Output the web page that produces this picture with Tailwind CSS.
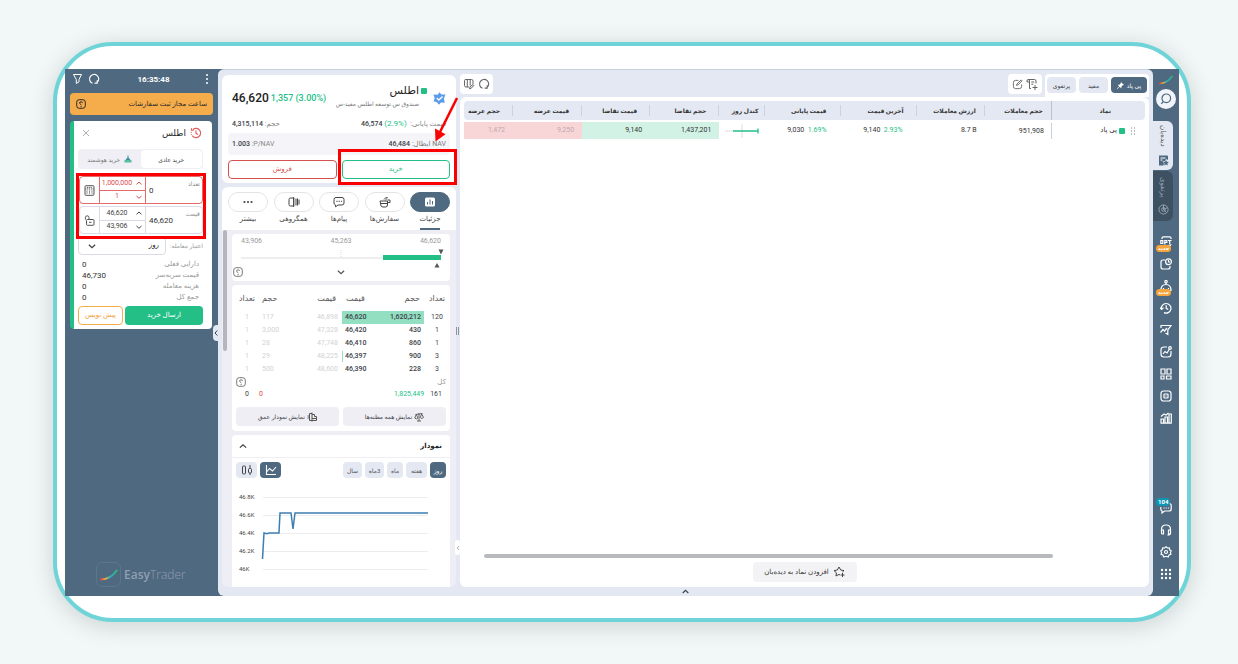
<!DOCTYPE html>
<html lang="fa">
<head>
<meta charset="utf-8">
<title>EasyTrader</title>
<script src="https://cdn.jsdelivr.net/npm/@tailwindcss/browser@4"></script>
</head>
<body class="flex min-h-screen bg-[#f2f8f8] pt-[42px] pr-[47px] pb-[42px] pl-[53px] font-['Roboto','DejaVu_Sans',sans-serif] text-[7px] leading-[11px] text-[#3c4248] whitespace-nowrap">
<svg class="absolute size-0">
  <symbol id="up" viewBox="0 0 8 8"><path d="M1.500 5.300 4 3l2.500 2.300" fill="none" stroke="currentColor"/></symbol>
  <symbol id="down" viewBox="0 0 8 8"><path d="M1.500 3 4 5.300 6.500 3" fill="none" stroke="currentColor"/></symbol>
  <symbol id="help" viewBox="0 0 10 10"><rect x=".7" y=".7" width="8.600" height="8.600" rx="2.500" fill="none" stroke="currentColor"/><path d="M6.700 3.800C6.500 2.500 3.500 2.500 3.500 4c0 1 1.600.9 1.600 2.200M5.100 7v1.100" fill="none" stroke="currentColor"/></symbol>
  <symbol id="refresh" viewBox="0 0 12 12"><path d="M4.500 10.300A4.600 4.600 0 1 1 9 9.600M9.200 7.300v2.800H6.600" fill="none" stroke="currentColor" stroke-width="1.100"/></symbol>
  <symbol id="swoosh" viewBox="0 0 20 13"><path d="M1 11.500C9 11.500 14 8 18.500 1.500" fill="none" stroke="url(#sw)" stroke-width="2.200" stroke-linecap="round"/></symbol>
  <linearGradient id="sw"><stop offset="0" stop-color="#e8473f"/><stop offset=".3" stop-color="#f3b13c"/><stop offset=".6" stop-color="#1fb3c6"/><stop offset="1" stop-color="#35b875"/></linearGradient>
</svg>
<div class="flex flex-1 rounded-[60px] border-4 border-[#6fd4d8] bg-white px-2 pt-[23px] pb-[22px] shadow-[0_4px_24px_rgba(0,0,0,0.16)]">
<div class="flex min-w-0 flex-1 bg-[#4f6980]">

  <!-- Order entry -->
  <aside class="relative flex w-[153px] shrink-0 flex-col px-[5px]">
    <header class="flex h-5 items-center pl-px text-white">
      <button aria-label="filter" class="ml-px"><svg class="size-3" viewBox="0 0 12 12" fill="none" stroke="currentColor"><path d="M1.500 1.500h8L7 6.500v2.300L4.300 10.500v-4z"/></svg></button>
      <button aria-label="refresh" class="ml-1"><svg class="size-3"><use href="#refresh"/></svg></button>
      <time class="flex-1 pl-[6px] text-center text-[8px] font-bold">16:35:48</time>
      <button aria-label="menu" class="w-3"><svg class="size-3" viewBox="0 0 12 12" fill="currentColor"><circle cx="6" cy="2" r="1"/><circle cx="6" cy="6" r="1"/><circle cx="6" cy="10" r="1"/></svg></button>
    </header>
    <div class="mt-1 flex h-[22px] items-center justify-between rounded bg-[#f5ad4b] px-1.5 text-[#2a2a2a]">
      <svg class="size-2.5"><use href="#help"/></svg>
      <span dir="rtl">ساعت مجاز ثبت سفارشات</span>
    </div>
    <form class="relative mt-1.5 mr-px rounded border-l-4 border-[#24bf87] bg-white pr-[9px] pb-1 pl-1">
      <div class="flex h-7 items-center justify-between pr-px pb-1 pl-1 text-[9px] text-[#25282c]">
        <button type="button" aria-label="close"><svg class="size-2" viewBox="0 0 8 8" stroke="#999" fill="none" stroke-width=".8"><path d="m1 1 6 6M7 1 1 7"/></svg></button>
        <div class="flex items-center gap-1"><span dir="rtl">اطلس</span>
        <svg class="size-3" viewBox="0 0 12 12" fill="none" stroke="#e05a5a" stroke-width="1.100"><path d="M3 2.500A4.600 4.600 0 1 1 2.200 8.600" /><path d="M1.500 1.300v2h2.200M6 3.500v3l2 1M1.300 5v.8M1.500 7v.7"/></svg></div>
      </div>
      <div class="flex h-5 rounded bg-[#f0eff5] p-px text-[6px]" dir="rtl">
        <button type="button" class="flex-1 rounded bg-white">خرید عادی</button>
        <button type="button" class="flex flex-1 items-center justify-center gap-1 text-[#777]"><svg class="size-2" viewBox="0 0 8 8"><path d="M3.500.5h1v2L7 5.500H1l2.500-3z" fill="#3b8fa6"/><path d="M.5 5h7v2.500h-7z" fill="#59bda0"/></svg>خرید هوشمند</button>
      </div>
      <div class="mt-[7px] ml-px flex h-7 rounded border border-[#e46a6a] text-[#d94b4b]">
        <button type="button" aria-label="calculator" class="flex w-5 items-center justify-center border-r border-[#e46a6a]"><svg class="size-[11px]" viewBox="0 0 11 11" fill="none" stroke="#555"><rect x="1" y=".7" width="9" height="9.600" rx="1"/><path d="M1 4h9M2.800 2.400h5.400M3 5.500v3.600M5.500 5.500v3.600M8 5.500v3.600" stroke-dasharray="1.200 .7"/></svg></button>
        <div class="flex w-[46px] flex-col border-r border-[#e46a6a]">
          <button type="button" class="flex flex-1 items-center justify-end border-b border-[#e46a6a] pr-0.5"><span class="w-8 text-center">1,000,000</span><svg class="ml-0.5 size-2"><use href="#up"/></svg></button>
          <button type="button" class="flex flex-1 items-center justify-end pr-0.5"><span class="w-8 text-center">1</span><svg class="ml-0.5 size-2"><use href="#down"/></svg></button>
        </div>
        <div class="flex flex-1 items-center pl-[3px] text-[#333]"><input id="qty" value="0" class="w-6 bg-transparent text-[8px] outline-none"><label for="qty" dir="rtl" class="mb-3.5 ml-auto pr-0.5 text-[6px] text-[#888]">تعداد</label></div>
      </div>
      <div class="mt-0.5 ml-px flex h-7 rounded border border-[#dadae2] text-[#444]">
        <button type="button" aria-label="unlock" class="flex w-5 items-center justify-center border-r border-[#dadae2]"><svg class="size-[11px]" viewBox="0 0 11 11" fill="none" stroke="#555"><rect x="2.500" y="4.500" width="7.500" height="5.800" rx="1"/><path d="M5 4.500V2.600a1.800 1.800 0 0 0-3.600 0v2M5 7.300h2.500"/></svg></button>
        <div class="flex w-[46px] flex-col border-r border-[#dadae2]">
          <button type="button" class="flex flex-1 items-center justify-end border-b border-[#dadae2] pr-0.5"><span class="w-8 text-center">46,620</span><svg class="ml-0.5 size-2"><use href="#up"/></svg></button>
          <button type="button" class="flex flex-1 items-center justify-end pr-0.5"><span class="w-8 text-center">43,906</span><svg class="ml-0.5 size-2"><use href="#down"/></svg></button>
        </div>
        <div class="flex flex-1 items-center pl-[3px] text-[#333]"><input id="price" value="46,620" class="w-7 bg-transparent text-[8px] outline-none"><label for="price" dir="rtl" class="mb-3.5 ml-auto pr-0.5 text-[6px] text-[#888]">قیمت</label></div>
      </div>
      <div class="mt-0.5 flex h-[19px] items-center justify-between">
        <div class="relative h-full w-[88px] rounded border border-[#dadae2]">
          <select id="validity" dir="rtl" class="h-full w-full appearance-none bg-transparent pr-1.5 text-[7px] text-[#222]"><option>روز</option></select>
          <svg class="pointer-events-none absolute top-1 left-2 size-2.5"><use href="#down"/></svg>
        </div>
        <label for="validity" dir="rtl" class="text-[6px] text-[#999]">اعتبار معامله:</label>
      </div>
      <dl class="mt-1 mb-[3px] px-1 text-[8px] leading-[11px] text-[#999] [&_dd]:text-[#333]">
        <div class="flex justify-between"><dd>0</dd><dt dir="rtl" class="text-[7px]">دارایی فعلی</dt></div>
        <div class="flex justify-between"><dd>46,730</dd><dt dir="rtl" class="text-[7px]">قیمت سربه‌سر</dt></div>
        <div class="flex justify-between"><dd>0</dd><dt dir="rtl" class="text-[7px]">هزینه معامله</dt></div>
        <div class="flex justify-between"><dd>0</dd><dt dir="rtl" class="text-[7px]">جمع کل</dt></div>
      </dl>
      <div class="flex h-[19px] gap-0.5">
        <button type="button" dir="rtl" class="w-[45px] rounded border border-[#f5ad4b] text-[#f0a13c]">پیش نویس</button>
        <button dir="rtl" class="flex-1 rounded bg-[#24bf87] text-white">ارسال خرید</button>
      </div>
      <div class="pointer-events-none absolute top-[52px] right-1.5 left-0.5 h-[66px] border-3 border-[#fb0000]"></div>
    </form>
    <div class="mt-auto mb-[9px] ml-[26px] flex items-center gap-[3px] font-['Open_Sans','DejaVu_Sans',sans-serif] text-[#8f9fb2]">
      <span class="flex size-[25px] items-center justify-center rounded-md border border-[#5d768c]"><svg class="h-3 w-[18px]"><use href="#swoosh"/></svg></span>
      <span class="text-[12px]"><b class="font-semibold">Easy</b><span class="font-light">Trader</span></span>
    </div>
    <button aria-label="collapse" class="absolute top-64 right-0 flex h-4 w-[5px] items-center justify-center rounded-l bg-[#e3e8f2]"><svg class="size-2 shrink-0 -rotate-90"><use href="#up"/></svg></button>
  </aside>

  <main class="flex min-w-0 flex-1 flex-col rounded-md border-t border-[#c9d2e0] bg-[#e3e8f2] px-1">
  <div class="flex min-h-0 flex-1 pt-[3px]">

    <!-- Instrument details -->
    <section class="relative mt-0.5 mr-1 flex w-[234px] shrink-0 flex-col gap-1">
      <article class="relative h-[108px] rounded-md bg-white px-1.5 pt-1.5">
        <div class="flex h-[34px] items-center pl-1 pr-1">
          <span class="text-[12px] font-medium text-[#222]">46,620</span>
          <span class="ml-[2px] text-[9px] font-medium text-[#24bf87]">1,357 (3.00%)</span>
          <div class="ml-auto flex flex-col items-end pb-1">
            <h1 class="flex items-center gap-0.5 text-[11px] leading-[14px] text-[#222]"><span dir="rtl">اطلس</span><i class="size-1.5 rounded-[1px] bg-[#24bf87]"></i></h1>
            <span dir="rtl" class="mr-2 text-[6px] text-[#777]">صندوق س.توسعه اطلس مفید-س</span>
          </div>
          <svg class="ml-1.5 size-[13px]" viewBox="0 0 13 13"><path d="m6.500.3 1.900 2.300 4.100-.2-1.600 4 .8 4.400-3.800-.2L6 12.800 3.700 9.900.7 9.400l1-3.300L.4 2.400l4.200.3z" fill="#5b9bea"/><path d="m3.800 6 2 2 3.800-3.500" fill="none" stroke="#fff" stroke-width="1.300"/></svg>
        </div>
        <div class="flex h-[18px] items-center justify-between px-1">
          <span><b class="font-medium">4,315,114</b> <span dir="rtl" class="text-[#888]">حجم:</span></span>
          <span><b class="font-medium">46,574</b> <span class="text-[8px] text-[#24bf87]">(2.9%)</span> &nbsp;<span dir="rtl" class="text-[#888]">قیمت پایانی:</span></span>
        </div>
        <div class="flex h-[22px] items-center justify-between rounded bg-[#f5f5f9] px-1">
          <span><b class="font-medium">1.003</b> <span class="text-[#888]">:P/NAV</span></span>
          <span class="flex gap-0.5"><b class="font-medium">46,484</b><span dir="rtl" class="text-[#777]"><bdi>NAV</bdi> ابطال:</span></span>
        </div>
        <div class="mt-[5px] flex h-[19px] gap-[5px]">
          <button dir="rtl" class="flex-1 rounded border border-[#d65050] text-[#d65050]">فروش</button>
          <button dir="rtl" class="flex-1 rounded border border-[#24bf87] text-[#24bf87]">خرید</button>
        </div>
        <div class="pointer-events-none absolute top-[74px] -right-px h-9 w-[119px] border-3 border-[#fb0000]"></div>
        <svg class="pointer-events-none absolute top-5 -right-1 z-10 h-[50px] w-7" viewBox="0 0 28 50"><path d="M25 3 8 37" stroke="#fb0000" stroke-width="2.500" fill="none"/><path d="M3.500 46.500 3 33.500l10.500 5.700z" fill="#fb0000"/></svg>
      </article>

      <article class="flex min-h-0 flex-1 flex-col overflow-hidden rounded-md bg-[#efeef4]">
        <nav class="flex h-[43px] shrink-0 justify-between bg-white px-1.5 pt-[5px] text-[#444] [&_button]:flex [&_button]:w-10 [&_button]:flex-col [&_button]:items-center [&_button]:gap-0.5 [&_i]:flex [&_i]:h-5 [&_i]:w-full [&_i]:items-center [&_i]:justify-center [&_i]:rounded-full [&_i]:border [&_i]:border-[#e4e4e8] [&_svg]:size-3">
          <button><i><svg viewBox="0 0 12 12" fill="#444"><circle cx="2.500" cy="6" r="1.100"/><circle cx="6" cy="6" r="1.100"/><circle cx="9.500" cy="6" r="1.100"/></svg></i><span dir="rtl">بیشتر</span></button>
          <button><i><svg viewBox="0 0 12 12" fill="none" stroke="#444"><path d="M2.500 2h3.200v8H2.500Q1 10 1 8.500v-5Q1 2 2.500 2zM5.700 1v10M8 2.500v7M9.500 2.500v7M11 3.500v5"/></svg></i><span dir="rtl">همگروهی</span></button>
          <button><i><svg viewBox="0 0 12 12" fill="none" stroke="#444"><path d="M3 1.500h6q2 0 2 2V7q0 2-2 2H5l-2.500 1.800V9Q1 8.500 1 7V3.500q0-2 2-2z"/><path d="M3.300 5.300h5.800" stroke-dasharray="1.300 1"/></svg></i><span dir="rtl">پیام‌ها</span></button>
          <button><i><svg viewBox="0 0 12 12" fill="none" stroke="#444"><path d="M1 5h7.500v4q0 2-2 2H4Q2 11 1.800 9zM1 7.500h7M5 3.500 7.500 1l1 1L6.300 4.200M8.500 4H11v2.500H8.500"/></svg></i><span dir="rtl">سفارش‌ها</span></button>
          <button><i class="border-[#4f6980]! bg-[#4f6980]"><svg viewBox="0 0 12 12"><rect x="1" y="1.500" width="10" height="9" rx="1.500" fill="#fff"/><path d="M3.500 6v2.500M6 3.500v5M8.500 5v3.500" stroke="#4f6980"/></svg></i><span dir="rtl" class="border-b-2 border-[#4f6980] pb-[3px]">جزئیات</span></button>
        </nav>
        <div class="relative flex min-h-0 flex-1 flex-col gap-1 overflow-hidden pt-1 pr-1.5 pl-2.5">
          <div class="absolute top-0 left-px h-[121px] w-1 rounded bg-[#b5b6bb]"></div>
          <div class="flex h-[47px] shrink-0 flex-col rounded bg-white px-[9px] pt-0.5 text-[#999]">
            <div class="flex justify-between"><span>43,906</span><span>45,263</span><span>46,620</span></div>
            <svg class="h-5 w-full overflow-visible" viewBox="0 0 200 20"><path d="M0 11h142" stroke="#ddd"/><path d="M100 3v8" stroke="#ddd" stroke-dasharray="1 1"/><path d="M142 8h58v5h-58z" fill="#24bf87"/><path d="M197.500 2.500h5l-2.500 5zM193.500 20.500h5L196 16z" fill="#555"/></svg>
            <div class="-mx-2 flex justify-between text-[#555]"><svg class="size-2.5 text-[#777]"><use href="#help"/></svg><svg class="size-2.5"><use href="#down"/></svg><span class="w-2.5"></span></div>
          </div>
          <div class="shrink-0 rounded bg-white pb-[5px]">
            <table class="w-full table-fixed [&_td]:p-0 [&_th]:p-0 [&_th]:font-normal">
              <colgroup><col class="w-[30px]"><col class="w-10"><col class="w-10"><col class="w-10"><col class="w-[42px]"><col class="w-[26px]"></colgroup>
              <thead><tr class="h-[26px] text-[8px] text-[#555]"><th>تعداد</th><th class="text-left">حجم</th><th><div class="pr-1.5 text-right">قیمت</div></th><th><div class="pl-1 text-left">قیمت</div></th><th><div class="pr-1 text-right">حجم</div></th><th>تعداد</th></tr></thead>
              <tbody class="[&_td:nth-child(-n+3)]:text-[#d2d2d4] [&_td:nth-child(1)]:text-center [&_td:nth-child(6)]:text-center [&_tr]:h-[13px]">
                <tr><td>1</td><td>117</td><td><div class="pr-1 text-right">46,898</div></td><td class="bg-[#92dfc2]"><div class="pl-[3px] font-medium">46,620</div></td><td class="bg-[#92dfc2]"><div class="pr-[3px] text-right font-medium">1,620,212</div></td><td>120</td></tr>
                <tr><td>1</td><td>3,000</td><td><div class="pr-1 text-right">47,328</div></td><td><div class="pl-[3px] font-medium">46,420</div></td><td><div class="pr-[3px] text-right font-medium">430</div></td><td>1</td></tr>
                <tr><td>1</td><td>28</td><td><div class="pr-1 text-right">47,748</div></td><td><div class="pl-[3px] font-medium">46,410</div></td><td><div class="pr-[3px] text-right font-medium">860</div></td><td>1</td></tr>
                <tr><td>1</td><td>29</td><td><div class="pr-1 text-right">48,225</div></td><td><div class="border-l border-[#92dfc2] pl-0.5 font-medium">46,397</div></td><td><div class="pr-[3px] text-right font-medium">900</div></td><td>3</td></tr>
                <tr><td>1</td><td>500</td><td><div class="pr-1 text-right">48,600</div></td><td><div class="pl-[3px] font-medium">46,390</div></td><td><div class="pr-[3px] text-right font-medium">228</div></td><td>3</td></tr>
              </tbody>
            </table>
            <div class="flex h-3 items-center justify-between px-1 text-[#999]"><svg class="size-2.5 text-[#777]"><use href="#help"/></svg><span dir="rtl">کل</span></div>
            <div class="flex h-[13px] items-center pr-2 pl-[13px]"><span>0</span><span class="ml-2.5 text-[#e04848]">0</span><span class="ml-auto text-[#24bf87]">1,825,449</span><span class="ml-1.5">161</span></div>
            <div class="mt-1.5 flex h-[19px] gap-1 px-1 [&_button]:flex [&_button]:flex-1 [&_button]:items-center [&_button]:justify-center [&_button]:gap-0.5 [&_button]:rounded [&_button]:bg-[#efeef4] [&_svg]:size-2.5">
              <button dir="rtl"><svg viewBox="0 0 10 10" fill="none" stroke="#555"><path d="M5 .5v9M5 1.500H2.500V8.500H5M2.500 4H.5M2.500 6H.5M5 2.500h2.500v2h2v4H5M5 6.500h4.500"/></svg><span class="text-[6px]">نمایش نمودار عمق</span></button>
              <button dir="rtl"><svg viewBox="0 0 10 10" fill="none" stroke="#555" stroke-width=".9"><path d="M5 1v8M3 9h4M1.500 2.500 8.500 1.500M2.300 2.500.7 6q1.700 2 3.300 0zM7.700 2 6.200 5.500q1.700 2 3.300 0z"/></svg><span class="text-[6px]">نمایش همه مظنه‌ها</span></button>
            </div>
          </div>
          <div class="flex min-h-0 flex-1 flex-col rounded-t bg-white">
            <div class="flex h-[23px] items-center justify-between border-b border-[#efeff3] px-1.5 pr-2"><svg class="size-2.5"><use href="#up"/></svg><h2 dir="rtl" class="font-bold text-[#222]">نمودار</h2></div>
            <div class="mt-1 flex h-4 items-stretch gap-[3px] px-1 text-[6px] text-[#555] [&_button]:flex [&_button]:items-center [&_button]:justify-center [&_button]:rounded [&_button]:bg-[#e3e8f2]">
              <button aria-label="candles" class="w-[21px]"><svg class="size-3" viewBox="0 0 12 12" fill="none" stroke="#444"><rect x="1.500" y="2" width="3" height="8" rx="1"/><rect x="7.500" y="4.500" width="3" height="4.500" rx="1"/><path d="M9 1v3.500M9 9v2"/></svg></button>
              <button aria-label="line" class="w-[21px] bg-[#4f6980]!"><svg class="size-3" viewBox="0 0 12 12" fill="none" stroke="#fff" stroke-width="1.100"><path d="M1.500 1v9.500H11M2 7.500l2.500-3 3 2.500L11 3"/></svg></button>
              <span class="flex-1"></span>
              <button class="w-[19px]">سال</button><button dir="rtl" class="w-[19px]">3ماه</button><button class="w-4">ماه</button><button class="w-[21px]">هفته</button><button class="w-4 bg-[#4f6980]! text-white">روز</button>
            </div>
            <svg class="mt-2 w-full" viewBox="0 0 218 96" fill="none"><path d="M31 11.500h165M31 29.500h165M31 47.500h165M31 65.500h165M31 83.500h165" stroke="#ededf0"/><path d="m30.500 73 1.500-26 3 .7 2-.7h10l1-20h11l2 16 2-16h133" stroke="#3d7eb2" stroke-width="1.500"/><g fill="#444" font-size="6"><text x="7" y="13">46.8K</text><text x="7" y="31">46.6K</text><text x="7" y="49">46.4K</text><text x="7" y="67">46.2K</text><text x="7" y="85">46K</text></g></svg>
          </div>
        </div>
      </article>
      <div class="absolute top-[252px] -right-[3px] h-2 w-[3px] border-x border-[#8b94a3]"></div>
      <button aria-label="collapse" class="absolute top-[465px] -right-1 flex h-[15px] w-[5px] items-center justify-center rounded-sm bg-white"><svg class="size-1.5 shrink-0 -rotate-90 text-[#888]"><use href="#up"/></svg></button>
    </section>

    <!-- Watchlist -->
    <section class="flex min-w-0 flex-1 flex-col">
      <div class="flex h-6 items-start pt-px">
        <div class="flex h-5 w-[33px] items-center justify-center gap-[3px] rounded bg-white text-[#666]">
          <button aria-label="columns"><svg class="size-3" viewBox="0 0 12 12" fill="none" stroke="currentColor"><path d="M6 9H3Q1.500 9 1.500 7.500v-5Q1.500 1.500 3 1.500h5.500q1.500 0 1.500 1.500v3M4.300 1.500V9M7.200 1.500V7.500M6.500 10.800l.5-2L10 6.500l1 1-3 2.800z"/></svg></button>
          <button aria-label="refresh"><svg class="size-3"><use href="#refresh"/></svg></button>
        </div>
        <div class="ml-auto flex h-5 w-[34px] items-center justify-center gap-[3px] rounded bg-white text-[#666]">
          <button aria-label="edit"><svg class="size-[11px]" viewBox="0 0 12 12" fill="none" stroke="currentColor"><path d="M7 1.500H4Q1.500 1.500 1.500 4v4Q1.500 10.500 4 10.500h4q2.500 0 2.500-2.500V6M5 7l.3-1.500L10 1l1 1-4.500 4.500z"/></svg></button>
          <button aria-label="add list"><svg class="size-3" viewBox="0 0 12 12" fill="none" stroke="currentColor"><path d="M5 10.500H3.500V3Q3.500 1.500 2 1.500h6.500Q10 1.500 10 3v2.500M2 1.500Q1 1.500 1 3v1h2.500M5.300 4h3M5.300 6.200h2M9 7v5M6.500 9.500h5"/></svg></button>
        </div>
        <div class="ml-[3px] flex h-[23px] gap-[3px] rounded-t bg-white px-0.5 pt-[3px] [&_button]:h-4 [&_button]:rounded [&_button]:bg-[#e3e8f2] [&_button]:text-[6px]">
          <button class="w-[29px]">پرتفوی</button><button class="w-[29px]">مفید</button>
          <button dir="rtl" class="flex w-9 items-center justify-center gap-[3px] bg-[#4f6980]! text-white">پی پاد<svg class="size-[7px]" viewBox="0 0 8 8"><path d="m4.500 0 3.500 3.500-1.500.3L5 5.500 5 7.500 3 5.500.5 8 0 7.500 2.500 5 .8 3 2.800 3 4.300 1.500z" fill="#fff"/></svg></button>
        </div>
      </div>
      <div class="flex min-h-0 flex-1 flex-col rounded-md bg-white px-1 pt-1">
        <table class="w-full table-fixed [&_td]:p-0 [&_th]:p-0">
          <colgroup><col class="w-[49px]"><col class="w-[69px]"><col class="w-[68px]"><col class="w-[69px]"><col class="w-[46px]"><col class="w-[75px]"><col class="w-[76px]"><col class="w-[68px]"><col class="w-[67px]"><col class="w-[93px]"></colgroup>
          <thead><tr class="h-[19px] bg-[#e3e8f2] text-[6px] text-[#333] [&_div]:border-[#cdd3de] [&_div]:pr-[12px] [&_div]:text-right [&_th:not(:last-child)_div]:border-r">
            <th class="rounded-l"><div>حجم عرضه</div></th><th><div>قیمت عرضه</div></th><th><div>قیمت تقاضا</div></th><th><div>حجم تقاضا</div></th><th><div class="pr-1.5!">کندل روز</div></th><th><div class="pr-[13px]!">قیمت پایانی</div></th><th><div>آخرین قیمت</div></th><th><div class="pr-2!">ارزش معاملات</div></th><th><div class="border-[#b9c0cc]! pr-2! leading-[19px]">حجم معاملات</div></th><th class="rounded-r"><div class="pr-[34px]!">نماد</div></th>
          </tr></thead>
          <tbody><tr><td class="h-0.5"></td></tr>
          <tr class="h-[17px] text-right text-[#333]">
            <td class="bg-[#f8d6d8] text-[#bfa9ac]"><div class="pr-2">1,472</div></td><td class="bg-[#f8d6d8] text-[#bfa9ac]"><div class="pr-2">9,250</div></td>
            <td class="bg-[#d2f2e6]"><div class="pr-2">9,140</div></td><td class="bg-[#d2f2e6]"><div class="pr-2">1,437,201</div></td>
            <td><svg class="mx-auto h-4 w-[34px]" viewBox="0 0 34 16"><path d="M0 8h8M17 1v14" stroke="#ddd" fill="none"/><path d="M8 8h25M33 5.500v5" stroke="#24bf87" stroke-width="1.300" fill="none"/></svg></td>
            <td><div class="pr-3.5">9,030 &nbsp;<span class="text-[#24bf87]">1.69%</span></div></td><td><div class="pr-3.5">9,140 &nbsp;<span class="text-[#24bf87]">2.93%</span></div></td>
            <td><div class="pr-2">8.7 B</div></td><td><div class="border-r border-[#c9cfdb] pr-[7px] leading-4">951,908</div></td>
            <td><div class="flex items-center justify-end gap-0.5 pr-2"><span>پی پاد</span><i class="size-1.5 rounded-[1px] bg-[#24bf87]"></i><svg class="ml-0.5 size-2" viewBox="0 0 8 8"><path d="M2.500.5v7M5.500.5v7" stroke="#777" stroke-dasharray="1 2"/></svg></div></td>
          </tr></tbody>
        </table>
        <div class="mt-auto ml-5 mr-[92px] h-1 shrink-0 rounded bg-[#b9babd]"></div>
        <button dir="rtl" class="mx-auto mt-1 mb-[5px] flex h-5 w-[104px] shrink-0 items-center justify-center gap-1 rounded bg-[#f3f3f6] text-[#333]"><svg class="size-3" viewBox="0 0 12 12" fill="none" stroke="#444"><path d="m7 9-1-.6L3 10l.4-3.200L1 4.600 4.300 4 6 1l1.700 3 3.300.6L9.500 6M9.500 7v4M7.500 9h4"/></svg>افزودن نماد به دیده‌بان</button>
      </div>
    </section>
  </div>
  <footer class="flex h-[9px] shrink-0 justify-center"><button aria-label="expand"><svg class="size-[9px]"><use href="#up"/></svg></button></footer>
  </main>

  <!-- Navigation rail -->
  <nav class="flex w-[26px] shrink-0 flex-col items-center pt-1.5 pb-4 text-white">
    <svg class="h-2.5 w-3.5"><use href="#swoosh"/></svg>
    <button aria-label="search" class="mt-1 flex size-5 shrink-0 items-center justify-center rounded-full bg-[#f1f4f8] text-[#4f6980]"><svg class="size-3" viewBox="0 0 12 12" fill="none" stroke="currentColor" stroke-width="1.200"><circle cx="6.300" cy="5.300" r="4.300"/><path d="m3.300 8.500-2 2.300"/></svg></button>
    <button class="mt-3 mr-auto flex h-[49px] w-5 shrink-0 flex-col items-center justify-between rounded-r-md bg-[#e3e8f2] py-1 text-[#555]"><span class="[writing-mode:vertical-rl] leading-[10px]">دیده‌بان</span><svg class="size-[11px]" viewBox="0 0 11 11"><path d="M1 .5h8q1 0 1 1V5L8 4 7 6 4.500 6.500 6 8.500 5.500 10.500H1z" fill="#4f6980"/><path d="m8 5 .9 1.800 2 .2-1.500 1.400.4 2L8 9.500 6.200 10.500l.4-2L5.100 7l2-.2z" fill="#4f6980"/><path d="M2.500 3h5M2.500 5h2" stroke="#fff"/></svg></button>
    <button class="mt-px mr-auto flex h-[50px] w-5 shrink-0 flex-col items-center justify-between rounded-r-md bg-[#3e5163] py-1.5 text-[#9aa7b5]"><span class="[writing-mode:vertical-rl] leading-[10px]">پرتفوی</span><svg class="size-[11px]" viewBox="0 0 12 12" fill="none" stroke="currentColor"><circle cx="6" cy="6" r="5"/><path d="M6 1v5l4-2M6 6l3.500 3.500"/><circle cx="6" cy="6" r="2"/></svg></button>
    <div class="mt-[15px] flex flex-col gap-2.5 [&_svg]:size-3 [&_svg]:fill-none [&_svg]:stroke-current [&_svg]:stroke-[1.2px]">
      <button aria-label="options" class="relative"><svg viewBox="0 0 12 12"><path d="M2 3V2Q2 .8 3.500.8h6Q11 .8 11 2v1M1 9.800h8q2 0 2-1.500"/><path d="M.8 4.500h2v3h-2zM4.800 8.500V4.500h2v2h-2M8 4.500h3.500M9.700 4.500v4"/></svg><span dir="rtl" class="absolute top-[9px] -left-1 rounded bg-[#f5a53c] px-0.5 text-[5px] leading-[7px] font-bold text-white">جدید</span></button>
      <button aria-label="tasks"><svg viewBox="0 0 12 12"><path d="M5 2H3Q1 2 1 4v5q0 2 2 2h5q2 0 2-2V8"/><circle cx="8.500" cy="3.700" r="2.900"/><path d="M8.500 2v2h1.500"/></svg></button>
      <button aria-label="robot" class="relative"><svg viewBox="0 0 12 12"><circle cx="6" cy="1.700" r="1.200"/><path d="M6 3v1M1 10.500Q1 4.500 6 4.500t5 6zM3.500 8v1M8.500 8v1"/></svg><span dir="rtl" class="absolute top-[9px] -left-1 rounded bg-[#f5a53c] px-0.5 text-[5px] leading-[7px] font-bold text-white">جدید</span></button>
      <button aria-label="history"><svg viewBox="0 0 12 12"><path d="M1.500 7.500A4.800 4.800 0 1 1 4 10.600M0 5.500l1.500 2 2-1.700M6.200 3.300v3l2 1.200"/></svg></button>
      <button aria-label="filters"><svg viewBox="0 0 12 12"><path d="M1 4V1.500h10L7.800 6v4.500L5.500 9M.5 8.500 3 5.500 4.500 7 7 4"/></svg></button>
      <button aria-label="analysis"><svg viewBox="0 0 12 12"><path d="M7 1H4Q1 1 1 4v4q0 3 3 3h4q3 0 3-3V5M3 8l2-2.500L7 7l2.500-4"/><circle cx="10" cy="2" r="1.300"/></svg></button>
      <button aria-label="widgets"><svg viewBox="0 0 12 12"><path d="M1 1h4v5H1zM7 1h4v5H7zM1 8h3v3H1zM6.500 8H11v3H6.500z"/></svg></button>
      <button aria-label="vault"><svg viewBox="0 0 12 12"><rect x="1" y="1" width="10" height="10" rx="2.500"/><rect x="4" y="4" width="4" height="4" rx=".5"/><path d="M5.500 6h1"/></svg></button>
      <button aria-label="reports"><svg viewBox="0 0 12 12"><path d="M1 7h2.500v4H1zM5 5h2.500v6H5zM9 2h2.300v9H9zM.5 11.200h11M1 4.500 4 2l2 1 2.500-2"/></svg></button>
    </div>
    <div class="mt-auto flex flex-col gap-2.5 [&_svg]:size-3 [&_svg]:fill-none [&_svg]:stroke-current [&_svg]:stroke-[1.2px]">
      <button aria-label="messages" class="relative"><svg viewBox="0 0 12 12"><path d="M9 1.500q2.200 0 2.200 2V7q0 2-2.200 2H4.500L2 11V9Q.8 8.500.8 7V5"/><path d="M3.500 6h6" stroke-dasharray="1.200 1"/></svg><span class="absolute -top-1 -left-1 rounded-sm bg-[#0f96b5] px-[2px] text-[6px] leading-2 font-bold text-white">104</span></button>
      <button aria-label="support"><svg viewBox="0 0 12 12"><path d="M1.500 8V5.500Q1.500 1 6 1t4.500 4.500V9q0 2-3 2.200M1.500 6h2v4h-1q-1 0-1-1.500zM10.500 6h-2v4h1q1 0 1-1.500z"/></svg></button>
      <button aria-label="settings"><svg viewBox="0 0 12 12"><path d="M6 .8 7.400 2l1.900-.2.300 1.900L11.200 5l-.8 1.500.5 1.900-1.800.6L8.200 11 6 10.300 3.800 11l-.9-2-1.800-.6.500-1.900L.8 5l1.600-1.300.3-1.900 1.900.2z"/><circle cx="6" cy="6" r="1.500"/></svg></button>
      <button aria-label="apps"><svg viewBox="0 0 12 12"><g fill="currentColor" stroke="none"><circle cx="2" cy="2" r="1.200"/><circle cx="6" cy="2" r="1.200"/><circle cx="10" cy="2" r="1.200"/><circle cx="2" cy="6" r="1.200"/><circle cx="6" cy="6" r="1.200"/><circle cx="10" cy="6" r="1.200"/><circle cx="2" cy="10" r="1.200"/><circle cx="6" cy="10" r="1.200"/><circle cx="10" cy="10" r="1.200"/></g></svg></button>
    </div>
  </nav>
</div>
</div>
</body>
</html>
